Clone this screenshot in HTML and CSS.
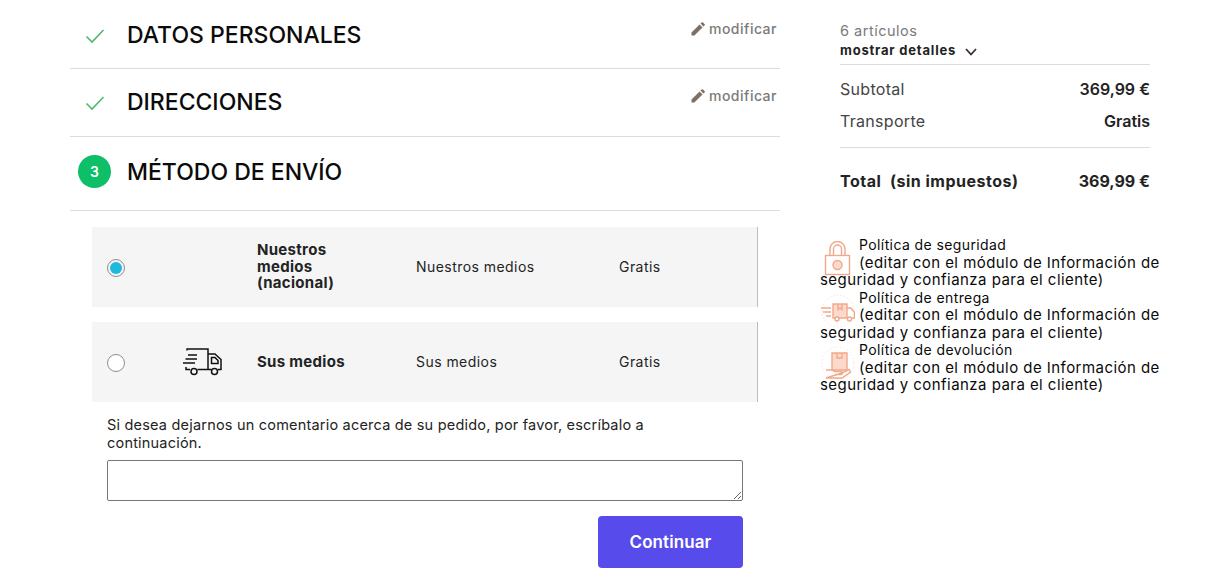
FILE: index.html
```html
<!DOCTYPE html>
<html lang="es">
<head>
<meta charset="utf-8">
<title>Pedido</title>
<link rel="stylesheet" href="styles.css">
</head>
<body>
<div class="page">
  <main class="steps">
    <section class="step done first">
      <span class="status"><svg class="check" viewBox="0 0 20 16" width="20" height="16"><path d="M1.5 8.5 L7 14 L18.5 2"/></svg></span>
      <h2>DATOS PERSONALES</h2>
      <a class="edit"><svg class="pencil" viewBox="0 0 14 14" width="14" height="14"><path d="M0.5 13.5 V10.6 L8.6 2.5 L11.5 5.4 L3.4 13.5 Z M9.5 1.6 L10.6 0.5 a1 1 0 0 1 1.4 0 L13.5 2 a1 1 0 0 1 0 1.4 L12.4 4.5 Z"/></svg>modificar</a>
    </section>
    <section class="step done second">
      <span class="status"><svg class="check" viewBox="0 0 20 16" width="20" height="16"><path d="M1.5 8.5 L7 14 L18.5 2"/></svg></span>
      <h2>DIRECCIONES</h2>
      <a class="edit"><svg class="pencil" viewBox="0 0 14 14" width="14" height="14"><path d="M0.5 13.5 V10.6 L8.6 2.5 L11.5 5.4 L3.4 13.5 Z M9.5 1.6 L10.6 0.5 a1 1 0 0 1 1.4 0 L13.5 2 a1 1 0 0 1 0 1.4 L12.4 4.5 Z"/></svg>modificar</a>
    </section>
    <section class="step current">
      <span class="status"><span class="badge">3</span></span>
      <h2>MÉTODO DE ENVÍO</h2>
    </section>
    <div class="options">
      <div class="option">
        <span class="radio-cell"><span class="radio checked"></span></span>
        <span class="logo-cell"></span>
        <strong class="name">Nuestros medios (nacional)</strong>
        <span class="desc">Nuestros medios</span>
        <span class="price">Gratis</span>
      </div>
      <div class="option">
        <span class="radio-cell"><span class="radio"></span></span>
        <span class="logo-cell">
          <svg class="truck" viewBox="0 0 40 28" width="40" height="28"><path d="M5 2.5 V1 H26 V21.5 H15.5 M26 6 H33 L39 11.5 V21.5 H36 M26 21.5 H29.5 M1 15 H13 M3.5 11 H15 M6 7 H15 M4 19 V21.5 H8"/><path d="M29.5 9.5 H33 L36 12.5 V15.5 H29.5 Z"/><circle cx="12" cy="23.5" r="3"/><circle cx="32.5" cy="23.5" r="3"/></svg>
        </span>
        <strong class="name">Sus medios</strong>
        <span class="desc">Sus medios</span>
        <span class="price">Gratis</span>
      </div>
    </div>
    <form class="comment">
      <label class="comment-label">Si desea dejarnos un comentario acerca de su pedido, por favor, escríbalo a<br>continuación.</label>
      <textarea class="comment-box"></textarea>
      <div class="actions"><button type="button" class="continue">Continuar</button></div>
    </form>
  </main>
  <aside class="side">
    <div class="summary">
      <p class="count">6 artículos</p>
      <p class="details">mostrar detalles <svg class="chev" viewBox="0 0 12 8" width="12" height="8"><path d="M1 1 L6 6.5 L11 1"/></svg></p>
      <div class="lines">
        <div class="line"><span>Subtotal</span><b>369,99 €</b></div>
        <div class="line"><span>Transporte</span><b>Gratis</b></div>
      </div>
      <div class="total"><b>Total&nbsp; (sin impuestos)</b><b>369,99 €</b></div>
    </div>
    <div class="policies">
      <div class="policy">
        <svg class="policy-icon" viewBox="0 0 35 35" width="35" height="35"><g class="ic"><rect x="5.5" y="14.5" width="24" height="19"/><path d="M10 14.5 V8 a7.5 7.5 0 0 1 15 0 V14.5 M13.5 14.5 V8 a4 4 0 0 1 8 0 V14.5"/><circle class="fill" cx="17.5" cy="24" r="4.5"/></g></svg>
        <span class="policy-title">Política de seguridad</span><br>(editar con el módulo de Información de seguridad y confianza para el cliente)
      </div>
      <div class="policy">
        <svg class="policy-icon" viewBox="0 0 35 35" width="35" height="35"><circle class="halo" cx="18" cy="17" r="16"/><g class="ic"><path class="fill" d="M13 10 H27 V24 H13 Z"/><path d="M18 10 V15.5 L20 14 L22 15.5 V10 M27 14 H31 L34.5 18.5 V24 H27 M1 14 H11 M3 18 H11 M6 22 H11"/><circle class="white" cx="17" cy="25" r="2"/><circle class="white" cx="29.5" cy="25" r="2"/></g></svg>
        <span class="policy-title">Política de entrega</span><br>(editar con el módulo de Información de seguridad y confianza para el cliente)
      </div>
      <div class="policy">
        <svg class="policy-icon" viewBox="0 0 35 35" width="35" height="35"><circle class="halo" cx="18" cy="17" r="16"/><g class="ic"><path class="fill" d="M12 7 H27 V24 H12 Z"/><path d="M17 7 V12 H22 V7 M6 24 H12 L15 25.5 H21 a1.5 1.5 0 0 1 0 3 H15 M22 27 L29 23.5 L30.5 26 L22 32 H6 Z"/></g></svg>
        <span class="policy-title">Política de devolución</span><br>(editar con el módulo de Información de seguridad y confianza para el cliente)
      </div>
    </div>
  </aside>
</div>
</body>
</html>
```
FILE: styles.css
```css
* { box-sizing: border-box; }
html, body { margin: 0; padding: 0; background: #fff; overflow: hidden; }
body { font-family: Inter, "Open Sans", sans-serif; color: #232323; }
.page { display: flex; height: 571px; padding-left: 70px; }
.steps { width: 710px; flex: none; }
.step { display: flex; align-items: center; border-bottom: 1px solid #dcdcdc; position: relative; height: 69px; padding-bottom: 2px; }
.step.first { padding-bottom: 0; padding-top: 2px; }
.step.second { height: 68px; }
.step.current { height: 74px; padding-bottom: 4px; }
.status { width: 57px; display: flex; justify-content: flex-start; padding-left: 8px; flex: none; }
.check { margin-left: 7px; margin-top: 2px; fill: none; stroke: #4cbb6c; stroke-width: 1.6; }
.badge { width: 33px; height: 33px; border-radius: 50%; background: #0dbf66; color: #fff; font-size: 14px; font-weight: 600; display: flex; align-items: center; justify-content: center; }
h2 { margin: 0; font-size: 23px; font-weight: 500; color: #0b0b0b; }
.edit { position: absolute; right: 3px; top: 20px; color: #7a7a7a; font-size: 14px; font-weight: 500; letter-spacing: .5px; display: flex; align-items: center; gap: 4px; }
.second .edit { top: 18px; }
.pencil { fill: #7b6f66; }
.options { padding: 16px 22px 0 22px; display: flex; flex-direction: column; gap: 15px; }
.option { height: 80px; background: #f5f5f5; border-right: 1px solid #bdbdbd; display: grid; grid-template-columns: 48px 117px 159px 203px 1fr; align-items: center; font-size: 14px; letter-spacing: .45px; }
.radio-cell { display: flex; justify-content: center; padding-top: 2px; }
.radio { width: 18px; height: 18px; border-radius: 50%; border: 1px solid #8f8f8f; background: #fff; display: block; }
.radio.checked { padding: 2px; background: #1fb9de content-box; }
.logo-cell { display: flex; justify-content: center; padding-left: 6px; }
.truck { fill: none; stroke: #111; stroke-width: 1.5; }
.name { font-size: 15px; line-height: 16.5px; font-weight: 700; color: #232323; letter-spacing: .3px; width: 100px; }
.desc, .price { margin-bottom: 2px; }
.comment { padding: 14px 37px 0; }
.comment-label { display: block; font-size: 14.5px; line-height: 18px; letter-spacing: .2px; color: #232323; }
.comment-box { display: block; width: 636px; height: 41px; margin-top: 8px; border: 1px solid #767676; border-radius: 2px; background: #fff; }
.actions { display: flex; justify-content: flex-end; margin-top: 15px; }
.continue { width: 145px; height: 52px; border: 0; border-radius: 4px; background: #574bec; color: #fff; font: 600 17px Inter, sans-serif; letter-spacing: .1px; padding-bottom: 2px; }
.side { margin-left: 40px; width: 346px; flex: none; }
.summary { margin-left: 20px; width: 310px; }
.count { margin: 22px 0 0; font-size: 14.5px; line-height: 18px; color: #7a7a7a; letter-spacing: .5px; }
.details { margin: 1px 0 0; font-size: 13px; line-height: 18px; font-weight: 700; letter-spacing: .8px; color: #232323; padding-bottom: 5px; border-bottom: 1px solid #dcdcdc; display: flex; align-items: center; gap: 9px; }
.chev { fill: none; stroke: #3a2f28; stroke-width: 1.8; margin-top: 3px; }
.lines { padding: 8px 0 10px; border-bottom: 1px solid #dcdcdc; }
.line { display: flex; justify-content: space-between; align-items: center; height: 32px; font-size: 16px; letter-spacing: .3px; color: #444; }
.line b { color: #232323; font-size: 16px; font-weight: 600; letter-spacing: 0; }
.total { display: flex; justify-content: space-between; padding-top: 23px; color: #232323; }
.total b { font-weight: 700; font-size: 16px; }
.total b:first-child { letter-spacing: .5px; }
.policies { margin-top: 45px; }
.policy { font-size: 15px; line-height: 17.5px; letter-spacing: .45px; color: #0a0a0a; }
.policy-title { font-size: 14px; letter-spacing: .4px; }
.policy-icon { float: left; margin: 5px 4px -5px 0; }
.ic { fill: none; stroke: #f2a88a; stroke-width: 1.4; }
.ic .fill { fill: #fbd9cb; }
.ic .white { fill: #fff; }
.halo { fill: none; stroke: #fbe4da; stroke-width: 1; stroke-dasharray: 1.5 2; }
```
